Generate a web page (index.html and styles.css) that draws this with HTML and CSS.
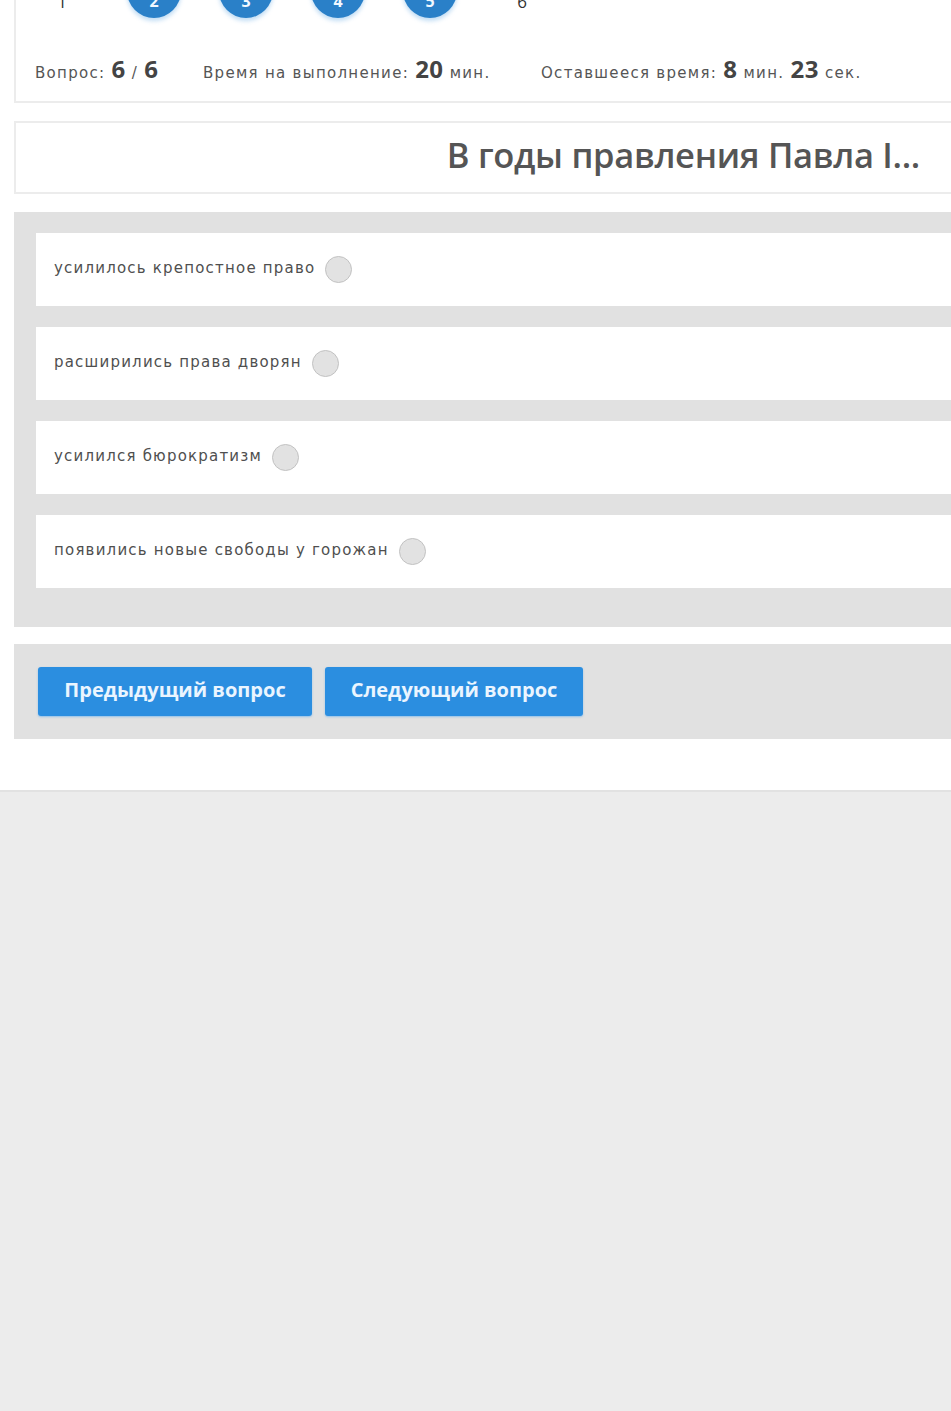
FILE: index.html
```html
<!DOCTYPE html>
<html lang="ru">
<head>
<meta charset="utf-8">
<title>Тест</title>
<link rel="stylesheet" href="styles.css">
</head>
<body>
<div class="page">
  <div class="wrap">
    <section class="top-card">
      <div class="pager">
        <div class="pg"><span class="pg-plain">1</span></div>
        <div class="pg"><span class="pg-dot">2</span></div>
        <div class="pg"><span class="pg-dot">3</span></div>
        <div class="pg"><span class="pg-dot">4</span></div>
        <div class="pg"><span class="pg-dot">5</span></div>
        <div class="pg"><span class="pg-plain">6</span></div>
      </div>
      <div class="stats">
        <span class="stat">Вопрос: <b>6</b> <span class="slash">/</span> <b>6</b></span>
        <span class="stat">Время на выполнение: <b>20</b> мин.</span>
        <span class="stat">Оставшееся время: <b>8</b> мин. <b>23</b> сек.</span>
      </div>
    </section>

    <section class="question">
      <h1 class="q-title">В годы правления Павла I...</h1>
    </section>

    <section class="answers">
      <label class="answer"><span class="a-text">усилилось крепостное право</span><span class="radio"></span></label>
      <label class="answer"><span class="a-text">расширились права дворян</span><span class="radio"></span></label>
      <label class="answer"><span class="a-text">усилился бюрократизм</span><span class="radio"></span></label>
      <label class="answer"><span class="a-text">появились новые свободы у горожан</span><span class="radio"></span></label>
    </section>

    <section class="controls">
      <button class="btn btn-prev">Предыдущий вопрос</button>
      <button class="btn btn-next">Следующий вопрос</button>
    </section>
  </div>
</div>
</body>
</html>
```

FILE: styles.css
```css
html, body {
  margin: 0;
  padding: 0;
  overflow: hidden;
}
body {
  background: #ececec;
  font-family: "Open Sans", "Liberation Sans", sans-serif;
  color: #555;
}
.page {
  background: #fff;
  border-bottom: 2px solid #e2e2e2;
  padding-bottom: 51px;
}
.wrap {
  margin-left: 14px;
  width: 960px;
  margin-top: -50px;
}
.top-card {
  border: 2px solid #ececec;
  padding: 12px 0 25px 0;
}
.pager {
  display: flex;
  height: 54px;
  align-items: center;
}
.pg {
  width: 92px;
  height: 54px;
  display: flex;
  justify-content: center;
  align-items: center;
}
.pg-plain {
  font-size: 17px;
  color: #333;
  padding-top: 20px;
}
.pg-dot {
  width: 54px;
  height: 54px;
  border-radius: 50%;
  background: #2a80c8;
  color: #f2f8ff;
  font-size: 16px;
  font-weight: 700;
  display: flex;
  align-items: center;
  justify-content: center;
  box-sizing: border-box;
  padding-top: 20px;
  box-shadow: 0 3px 4px rgba(120, 180, 230, 0.45);
}
.stats {
  margin-top: 34px;
  height: 24px;
  display: flex;
  align-items: baseline;
  padding-left: 19px;
}
.stat {
  font-family: "DejaVu Sans", sans-serif;
  font-size: 15px;
  color: #555;
  letter-spacing: 1.3px;
}
.stat:nth-child(1) { width: 168px; }
.stat:nth-child(2) { width: 338px; }
.stat b {
  font-family: "Open Sans", sans-serif;
  font-size: 24px;
  font-weight: 700;
  color: #444;
  letter-spacing: 0.5px;
}
.slash {
  font-size: 15px;
}
.question {
  margin-top: 18px;
  border: 2px solid #ececec;
  height: 69px;
  box-sizing: content-box;
  display: flex;
  align-items: center;
  justify-content: flex-end;
  padding-right: 52px;
}
.q-title {
  margin: 0 0 6px 0;
  font-size: 34.5px;
  font-weight: 600;
  color: #555;
  letter-spacing: -0.3px;
}
.answers {
  margin-top: 18px;
  background: #e1e1e1;
  padding: 21px 0 39px 22px;
  display: flex;
  flex-direction: column;
  gap: 21px;
}
.answer {
  background: #fff;
  height: 73px;
  display: flex;
  align-items: center;
  padding-left: 18px;
}
.a-text {
  font-family: "DejaVu Sans", sans-serif;
  font-size: 15px;
  color: #4f4f4f;
  letter-spacing: 1.2px;
  margin-top: -4px;
}
.radio {
  width: 27px;
  height: 27px;
  border-radius: 50%;
  background: #e2e2e2;
  border: 1px solid #c2c2c2;
  box-sizing: border-box;
  margin-left: 10px;
}
.controls {
  margin-top: 17px;
  background: #e1e1e1;
  height: 95px;
  box-sizing: border-box;
  padding: 23px 24px;
  display: flex;
  gap: 13px;
}
.btn {
  height: 49px;
  border: none;
  border-radius: 3px;
  background: #2b8ee0;
  color: #eaf5ff;
  font-family: "Open Sans", sans-serif;
  font-size: 20px;
  font-weight: 700;
  padding: 0 0 5px 0;
  box-shadow: 0 1px 2px rgba(90, 170, 240, 0.6);
}
.btn-prev { width: 274px; }
.btn-next { width: 258px; }
```
